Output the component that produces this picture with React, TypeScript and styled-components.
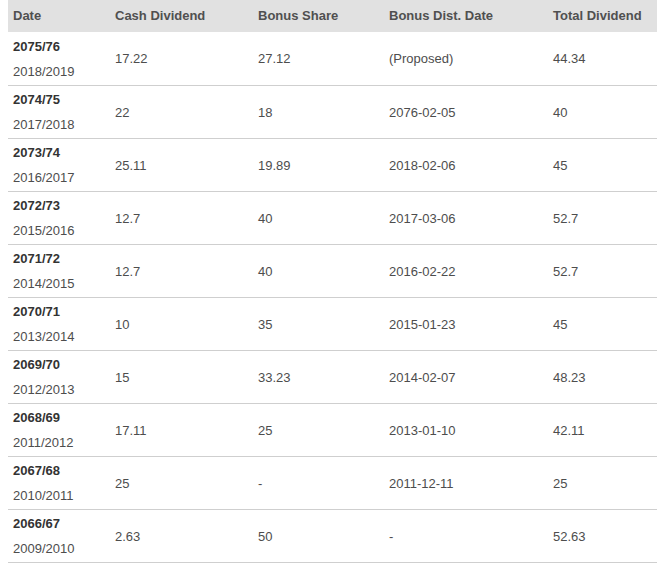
import React from "react";
import styled, { createGlobalStyle } from "styled-components";

const Global = createGlobalStyle`
  html, body { margin: 0; padding: 0; background: #fff; }
  body { font-family: "Liberation Sans", Arial, sans-serif; }
`;

const Wrap = styled.div`
  padding: 0 2px 0 8px;
`;

const Table = styled.table`
  width: 649px;
  border-collapse: collapse;
  table-layout: fixed;
  font-size: 13px;
  color: #4d4d4d;
`;

const HeadCell = styled.th<{ $w: number }>`
  width: ${(p) => p.$w}px;
  background: #e1e1e1;
  color: #505050;
  font-weight: bold;
  text-align: left;
  height: 32px;
  padding: 0 5px 2px;
  box-sizing: border-box;
  vertical-align: middle;
`;

const Row = styled.tr`
  border-bottom: 1px solid #cfcfcf;
`;

const Cell = styled.td`
  height: 53px;
  padding: 1px 5px 0;
  box-sizing: border-box;
  vertical-align: middle;
  line-height: 25px;
`;

const Bold = styled.b`
  display: block;
  color: #333;
  line-height: 25px;
`;

const Sub = styled.span`
  display: block;
  line-height: 25px;
`;

const cols = [
  { label: "Date", w: 102 },
  { label: "Cash Dividend", w: 143 },
  { label: "Bonus Share", w: 131 },
  { label: "Bonus Dist. Date", w: 164 },
  { label: "Total Dividend", w: 109 },
];

const rows = [
  ["2075/76", "2018/2019", "17.22", "27.12", "(Proposed)", "44.34"],
  ["2074/75", "2017/2018", "22", "18", "2076-02-05", "40"],
  ["2073/74", "2016/2017", "25.11", "19.89", "2018-02-06", "45"],
  ["2072/73", "2015/2016", "12.7", "40", "2017-03-06", "52.7"],
  ["2071/72", "2014/2015", "12.7", "40", "2016-02-22", "52.7"],
  ["2070/71", "2013/2014", "10", "35", "2015-01-23", "45"],
  ["2069/70", "2012/2013", "15", "33.23", "2014-02-07", "48.23"],
  ["2068/69", "2011/2012", "17.11", "25", "2013-01-10", "42.11"],
  ["2067/68", "2010/2011", "25", "-", "2011-12-11", "25"],
  ["2066/67", "2009/2010", "2.63", "50", "-", "52.63"],
];

export default function App() {
  return (
    <>
      <Global />
      <Wrap>
        <Table>
          <thead>
            <tr>
              {cols.map((c) => (
                <HeadCell key={c.label} $w={c.w}>
                  {c.label}
                </HeadCell>
              ))}
            </tr>
          </thead>
          <tbody>
            {rows.map((r) => (
              <Row key={r[0]}>
                <Cell>
                  <Bold>{r[0]}</Bold>
                  <Sub>{r[1]}</Sub>
                </Cell>
                <Cell>{r[2]}</Cell>
                <Cell>{r[3]}</Cell>
                <Cell>{r[4]}</Cell>
                <Cell>{r[5]}</Cell>
              </Row>
            ))}
          </tbody>
        </Table>
      </Wrap>
    </>
  );
}
